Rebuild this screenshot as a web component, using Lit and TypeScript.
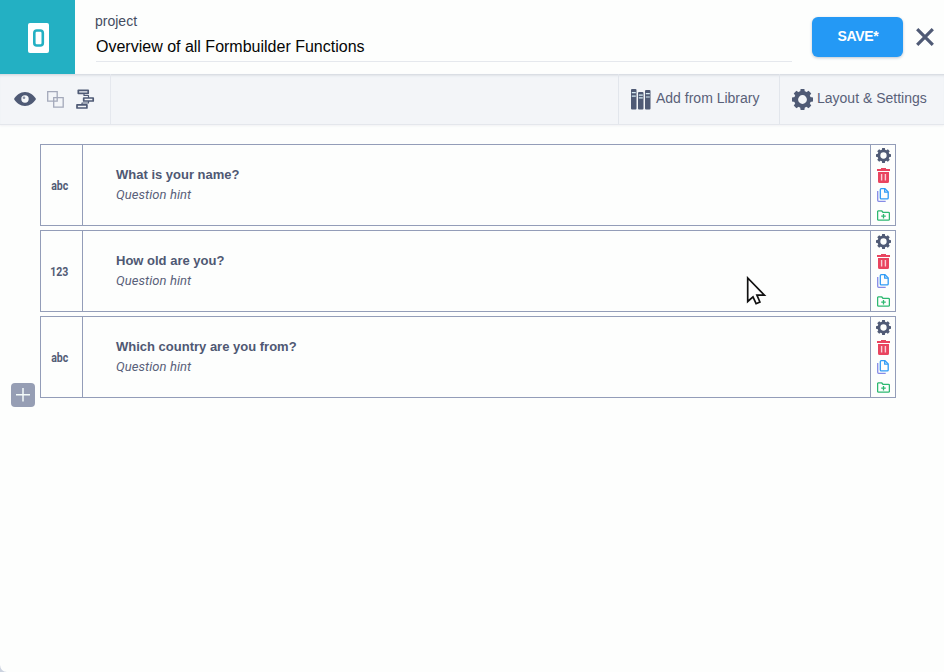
import { LitElement, html, svg, css } from "lit";
import { customElement, property } from "lit/decorators.js";

const GEAR_TEETH = [0, 45, 90, 135, 180, 225, 270, 315];

const gear = (size: number) => html`
  <svg width=${size} height=${size} viewBox="0 0 20 20" fill="none">
    <circle cx="10" cy="10" r="6.100" stroke="#4f5a75" stroke-width="3.800"></circle>
    ${GEAR_TEETH.map(
      (a) => svg`<path d="M7.700 3 8.200 0h3.600l.5 3z" fill="#4f5a75" transform="rotate(${a} 10 10)"></path>`
    )}
  </svg>`;

const eye = html`
  <svg width="22" height="14" viewBox="0 0 22 14">
    <path fill="#4f5a75" d="M0 7C2.400 3 6.300 0 11 0s8.600 3 11 7c-2.400 4-6.300 7-11 7S2.400 11 0 7z"></path>
    <circle cx="11" cy="7" r="3.700" fill="#f6f8fa"></circle>
    <circle cx="10" cy="5.800" r="1.300" fill="#8a92a6"></circle>
  </svg>`;

const squares = html`
  <svg width="17" height="17" viewBox="0 0 17 17" fill="none" stroke="#a4a9ba" stroke-width="1.300">
    <path d="M.7.7h9.500v9.500H.7zM6.700 6.700h9.500v9.500H6.700z"></path>
  </svg>`;

const flow = html`
  <svg width="19" height="21" viewBox="0 0 19 21" fill="none" stroke="#4f5a75" stroke-width="1.700" stroke-linejoin="round">
    <path d="M2.300 1.300h9.900v3H2.300zM7.700 9h9.500v3H7.700zM1 15.800h9.900v3.200H1z"></path>
    <path d="M8 4.500v2h4.500V9M12.500 12v2H6v2" stroke-width="1.200"></path>
  </svg>`;

const books = html`
  <svg width="20" height="21" viewBox="0 0 20 21">
    <g fill="#4f5a75">
      <rect x="0" y="0" width="5.500" height="20.500" rx="1"></rect>
      <rect x="7" y="3" width="5.500" height="17.500" rx="1"></rect>
      <rect x="14" y="1" width="5.500" height="19.500" rx="1"></rect>
    </g>
    <path fill="#d8edf5" d="M.8 3h4v1.300h-4zM.8 6.500h4v1.300h-4zM7.800 5.500h4v1.300h-4zM7.800 8.300h4v1.300h-4zM14.800 4h4v1.300h-4zM14.800 7.500h4v1h-4z"></path>
  </svg>`;

const trash = html`
  <svg width="13" height="15" viewBox="0 0 13 15">
    <path fill="#e9445f" d="M4 0h5v1h4v2H0V1h4zM1 4h11v9.500A1.500 1.500 0 0 1 10.500 15h-8A1.500 1.500 0 0 1 1 13.500z"></path>
    <path fill="#fff" opacity=".75" d="M3.900 6h1.400v6.500H3.900zM7.700 6h1.400v6.500H7.700z"></path>
  </svg>`;

const copy = html`
  <svg width="12" height="14" viewBox="0 0 12 14" fill="none" stroke="#2f9bf5" stroke-width="1.300" stroke-linejoin="round">
    <path d="M4.300.7h3.700l3.200 3.200v6q0 1-1 1H4.300q-1 0-1-1V1.700q0-1 1-1z"></path>
    <path d="M7.700.8v3.400h3.400"></path>
    <path d="M.7 3v9.300q0 1 1 1h7" stroke="#858be6"></path>
  </svg>`;

const folder = html`
  <svg width="13" height="11" viewBox="0 0 13 11" fill="none" stroke="#2db870" stroke-width="1.300" stroke-linejoin="round">
    <path d="M1.200.8h3.400l1.300 1.500h5.500q1 0 1 1v6q0 .9-1 .9H1.500q-.9 0-.9-.9V1.500z"></path>
    <path d="M6.500 3.900v4.600M4.200 6.200h4.600"></path>
  </svg>`;

@customElement("question-row")
export class QuestionRow extends LitElement {
  @property() kind = "";
  @property() heading = "";
  @property() hint = "";

  static styles = css`
    :host {
      display: grid;
      grid-template-columns: 41px 1fr 24px;
      height: 80px;
      border: 1px solid #939db8;
    }
    .kind {
      display: flex;
      align-items: center;
      justify-content: center;
      padding: 2px 4px 0 0;
      font: bold 12px/16px Roboto, sans-serif;
      color: #525b75;
    }
    .kind span {
      transform: scaleX(0.88);
    }
    .body {
      border-left: 1px solid #939db8;
      border-right: 1px solid #939db8;
      padding: 20px 0 0 33px;
    }
    .heading {
      font: bold 13px/20px "Liberation Sans", Arial, sans-serif;
      color: #4f5873;
    }
    .hint {
      font: italic 13px/20px Roboto, sans-serif;
      letter-spacing: 0.06px;
      color: #59617a;
    }
    .actions {
      display: grid;
      grid-template-rows: repeat(4, 20px);
      place-items: center;
    }
    svg {
      display: block;
    }
  `;

  render() {
    return html`
      <div class="kind"><span>${this.kind}</span></div>
      <div class="body">
        <div class="heading">${this.heading}</div>
        <div class="hint">${this.hint}</div>
      </div>
      <div class="actions">${gear(15)}${trash}${copy}${folder}</div>
    `;
  }
}

@customElement("app-root")
export class AppRoot extends LitElement {
  static styles = css`
    :host {
      display: block;
      position: relative;
      box-sizing: border-box;
      width: 944px;
      height: 672px;
      overflow: hidden;
      background: #fdfefd;
      font-family: "Liberation Sans", Arial, sans-serif;
      color: #4f5873;
    }
    svg {
      display: block;
      flex: none;
    }
    .header {
      display: flex;
      height: 74px;
    }
    .brand {
      width: 75px;
      display: flex;
      align-items: center;
      justify-content: center;
      background: #23b0c3;
      padding: 2px 0 0 2px;
      box-sizing: border-box;
    }
    .title {
      width: 696px;
      height: 49px;
      margin: 12px 0 0 21px;
      border-bottom: 1px solid #e5e8ed;
    }
    .crumb {
      margin-left: -1px;
      font-size: 14px;
      line-height: 18px;
      color: #444c62;
    }
    .name {
      font-size: 16px;
      line-height: 20px;
      margin-top: 7px;
      color: #050505;
    }
    .save {
      width: 91px;
      height: 40px;
      margin: 17px 0 0 20px;
      border: 0;
      border-radius: 6px;
      padding: 0 0 2px 1px;
      background: #2499f5;
      box-shadow: 0 1px 3px #bdc5d0;
      color: #fff;
      font: bold 14px/20px "Liberation Sans", Arial, sans-serif;
      letter-spacing: -0.3px;
    }
    .close {
      margin: 28px 0 0 13px;
    }
    .toolbar {
      display: flex;
      height: 51px;
      box-sizing: border-box;
      background: #f3f5f8;
      border-bottom: 1px solid #e4e7ec;
      box-shadow: inset 0 3px 3px -2px #ccd1d8, 0 1px 2px #f0f1f3;
      font-size: 14px;
    }
    .tools {
      display: flex;
      align-items: center;
      gap: 12px;
      width: 96px;
      padding-left: 14px;
      border-right: 1px solid #e5e8ee;
    }
    .tools svg:nth-child(2) {
      margin-left: -1px;
    }
    .spacer {
      flex: 1;
    }
    .item {
      display: flex;
      align-items: center;
      box-sizing: border-box;
      border-left: 1px solid #e2e6ec;
      padding-left: 12px;
      gap: 5px;
      color: #596178;
      white-space: nowrap;
    }
    .item span {
      padding-bottom: 3px;
    }
    .library {
      width: 161px;
    }
    .settings {
      width: 165px;
      gap: 4px;
    }
    .list {
      display: grid;
      gap: 4px;
      width: 856px;
      margin: 19px 0 0 40px;
    }
    .add {
      position: absolute;
      left: 11px;
      top: 383px;
      width: 24px;
      height: 24px;
      border-radius: 4px;
      background: #969eb4;
    }
    .cursor {
      position: absolute;
      left: 746px;
      top: 276px;
    }
    .corner {
      position: absolute;
      left: 0;
      bottom: 0;
    }
  `;

  render() {
    return html`
      <div class="header">
        <div class="brand">
          <svg width="21" height="30" viewBox="0 0 21 30">
            <rect width="21" height="30" rx="2" fill="#fff"></rect>
            <rect x="6.300" y="7.500" width="8.500" height="15" rx="2.500" fill="#fff" stroke="#23b0c3" stroke-width="2.600"></rect>
          </svg>
        </div>
        <div class="title">
          <div class="crumb">project</div>
          <div class="name">Overview of all Formbuilder Functions</div>
        </div>
        <button class="save">SAVE*</button>
        <svg class="close" width="18" height="18" viewBox="0 0 18 18" stroke="#4f5a75" stroke-width="3.200">
          <path d="M1.200 1.200 16.800 16.800M16.800 1.200 1.200 16.800"></path>
        </svg>
      </div>
      <div class="toolbar">
        <div class="tools">${eye}${squares}${flow}</div>
        <div class="spacer"></div>
        <div class="item library">${books}<span>Add from Library</span></div>
        <div class="item settings">${gear(21)}<span>Layout &amp; Settings</span></div>
      </div>
      <div class="list">
        <question-row kind="abc" heading="What is your name?" hint="Question hint"></question-row>
        <question-row kind="123" heading="How old are you?" hint="Question hint"></question-row>
        <question-row kind="abc" heading="Which country are you from?" hint="Question hint"></question-row>
      </div>
      <div class="add">
        <svg width="24" height="24" viewBox="0 0 24 24" stroke="#f4fbfa" stroke-width="1.500">
          <path d="M12 5v13.500M5 11.800h14"></path>
        </svg>
      </div>
      <svg class="cursor" width="22" height="32" viewBox="0 0 22 32">
        <path d="M1.700 2v23.500l5.300-4.700 3.100 6.900 3.800-1.700-3-6.800h7.500z" fill="#fff" stroke="#111" stroke-width="1.700"></path>
      </svg>
      <svg class="corner" width="7" height="7" viewBox="0 0 7 7">
        <path d="M0 0Q.5 6.500 7 7H0z" fill="#cbd2df"></path>
      </svg>
    `;
  }
}
